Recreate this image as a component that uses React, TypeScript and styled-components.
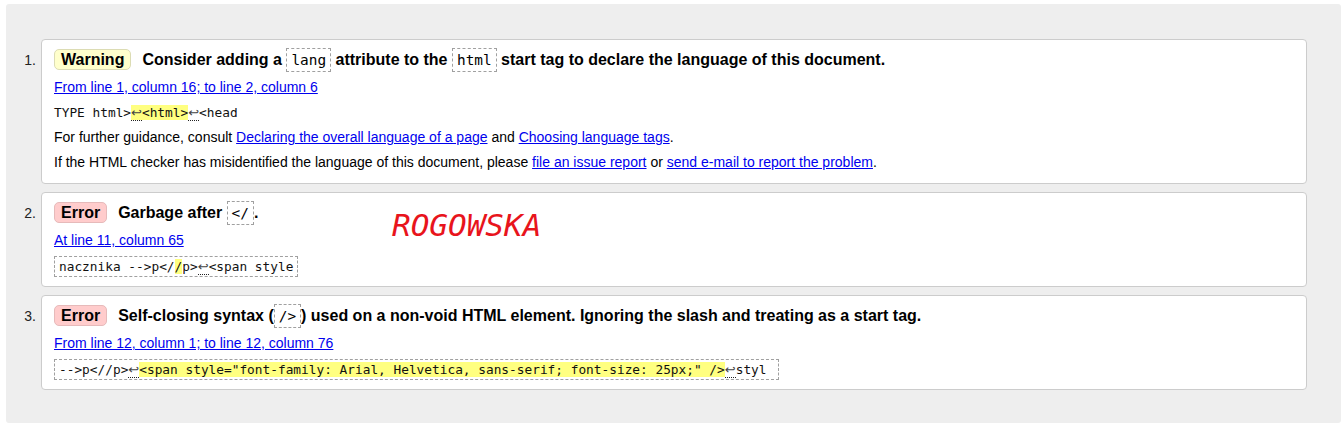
import React from "react";
import styled, { createGlobalStyle, css } from "styled-components";

const GlobalStyle = createGlobalStyle`
  html, body { margin: 0; padding: 0; background: #fff; }
  body {
    font-family: "Liberation Sans", Arial, sans-serif;
    font-size: 14px;
    color: #000;
  }
`;

const Panel = styled.div`
  margin: 4px 1px 0 6px;
  background: #eee;
  border-radius: 3px;
  padding: 35px 34px 33px 0;
`;

const List = styled.ol`
  list-style: none;
  margin: 0;
  padding: 0;
  display: flex;
  flex-direction: column;
  gap: 8px;
`;

const Item = styled.li`
  display: flex;
  align-items: baseline;
`;

const Num = styled.span`
  flex: none;
  width: 35px;
  box-sizing: border-box;
  padding-right: 5px;
  text-align: right;
  font-size: 14px;
  color: #222;
`;

const Card = styled.div<{ $pb: number }>`
  position: relative;
  flex: 1;
  min-width: 0;
  background: #fff;
  border: 1px solid #ccc;
  border-radius: 4px;
  padding: 7px 12px ${(p) => p.$pb}px;
`;

const Title = styled.p`
  margin: 0;
  font-weight: bold;
  font-size: 16px;
  line-height: 26px;
`;

const Badge = styled.span<{ $kind: "warning" | "error" }>`
  display: inline-block;
  padding: 0 6px;
  margin-right: 11px;
  border-radius: 5px;
  line-height: 19px;
  border: 1px solid;
  ${(p) =>
    p.$kind === "warning"
      ? css`
          background: #ffffcc;
          border-color: #dcdcb4;
        `
      : css`
          background: #ffcccc;
          border-color: #e6baba;
        `}
`;

const Code = styled.code`
  font-family: "DejaVu Sans Mono", monospace;
  font-size: 14.4px;
  font-weight: normal;
  border: 1px dashed #a0a0a0;
  padding: 3px 4px;
`;

const Loc = styled.p`
  margin: 0;
  line-height: 28px;
`;

const Link = styled.a`
  color: #0000ee;
  text-decoration: underline;
`;

const Extract = styled.div<{ $boxed?: boolean }>`
  font-family: "DejaVu Sans Mono", monospace;
  font-size: 12.8px;
  white-space: pre;
  color: #111;
  ${(p) =>
    p.$boxed
      ? css`
          width: fit-content;
          margin-top: 2px;
          border: 1px dashed #a0a0a0;
          padding: 0 4px;
          line-height: 19px;
        `
      : css`
          line-height: 24px;
        `}
`;

const Mark = styled.mark`
  background: #ffff80;
  color: inherit;
`;

const Lf = styled.span`
  font-family: "DejaVu Sans", sans-serif;
  font-size: 13px;
  border-bottom: 1px dotted #222;
  color: #444;
`;

const Para = styled.p`
  margin: 0;
  line-height: 25px;
`;

const Stamp = styled.span`
  position: absolute;
  left: 350px;
  top: 14px;
  font-family: "DejaVu Sans Mono", monospace;
  font-style: italic;
  font-size: 31px;
  line-height: 36px;
  color: #e8141c;
  pointer-events: none;
`;

export default function App() {
  return (
    <>
      <GlobalStyle />
      <Panel>
        <List>
          <Item>
            <Num>1.</Num>
            <Card $pb={8}>
              <Title>
                <Badge $kind="warning">Warning</Badge>
                Consider adding a <Code>lang</Code> attribute to the <Code>html</Code> start tag to
                declare the language of this document.
              </Title>
              <Loc>
                <Link href="#">From line 1, column 16; to line 2, column 6</Link>
              </Loc>
              <Extract>
                {"TYPE html>"}
                <Mark>
                  <Lf>↩</Lf>
                  {"<html>"}
                </Mark>
                <Lf>↩</Lf>
                {"<head"}
              </Extract>
              <Para>
                For further guidance, consult{" "}
                <Link href="#">Declaring the overall language of a page</Link> and{" "}
                <Link href="#">Choosing language tags</Link>.
              </Para>
              <Para>
                If the HTML checker has misidentified the language of this document, please{" "}
                <Link href="#">file an issue report</Link> or{" "}
                <Link href="#">send e-mail to report the problem</Link>.
              </Para>
            </Card>
          </Item>
          <Item>
            <Num>2.</Num>
            <Card $pb={9}>
              <Title>
                <Badge $kind="error">Error</Badge>
                Garbage after <Code>&lt;/</Code>.
              </Title>
              <Loc>
                <Link href="#">At line 11, column 65</Link>
              </Loc>
              <Extract $boxed>
                {"nacznika -->p</"}
                <Mark>/</Mark>
                {"p>"}
                <Lf>↩</Lf>
                {"<span style"}
              </Extract>
              <Stamp>ROGOWSKA</Stamp>
            </Card>
          </Item>
          <Item>
            <Num>3.</Num>
            <Card $pb={9}>
              <Title>
                <Badge $kind="error">Error</Badge>
                Self-closing syntax (<Code>/&gt;</Code>) used on a non-void HTML element. Ignoring
                the slash and treating as a start tag.
              </Title>
              <Loc>
                <Link href="#">From line 12, column 1; to line 12, column 76</Link>
              </Loc>
              <Extract $boxed>
                {"-->p<//p>"}
                <Lf>↩</Lf>
                <Mark>{'<span style="font-family: Arial, Helvetica, sans-serif; font-size: 25px;" />'}</Mark>
                <Lf>↩</Lf>
                {"styl "}
              </Extract>
            </Card>
          </Item>
        </List>
      </Panel>
    </>
  );
}
